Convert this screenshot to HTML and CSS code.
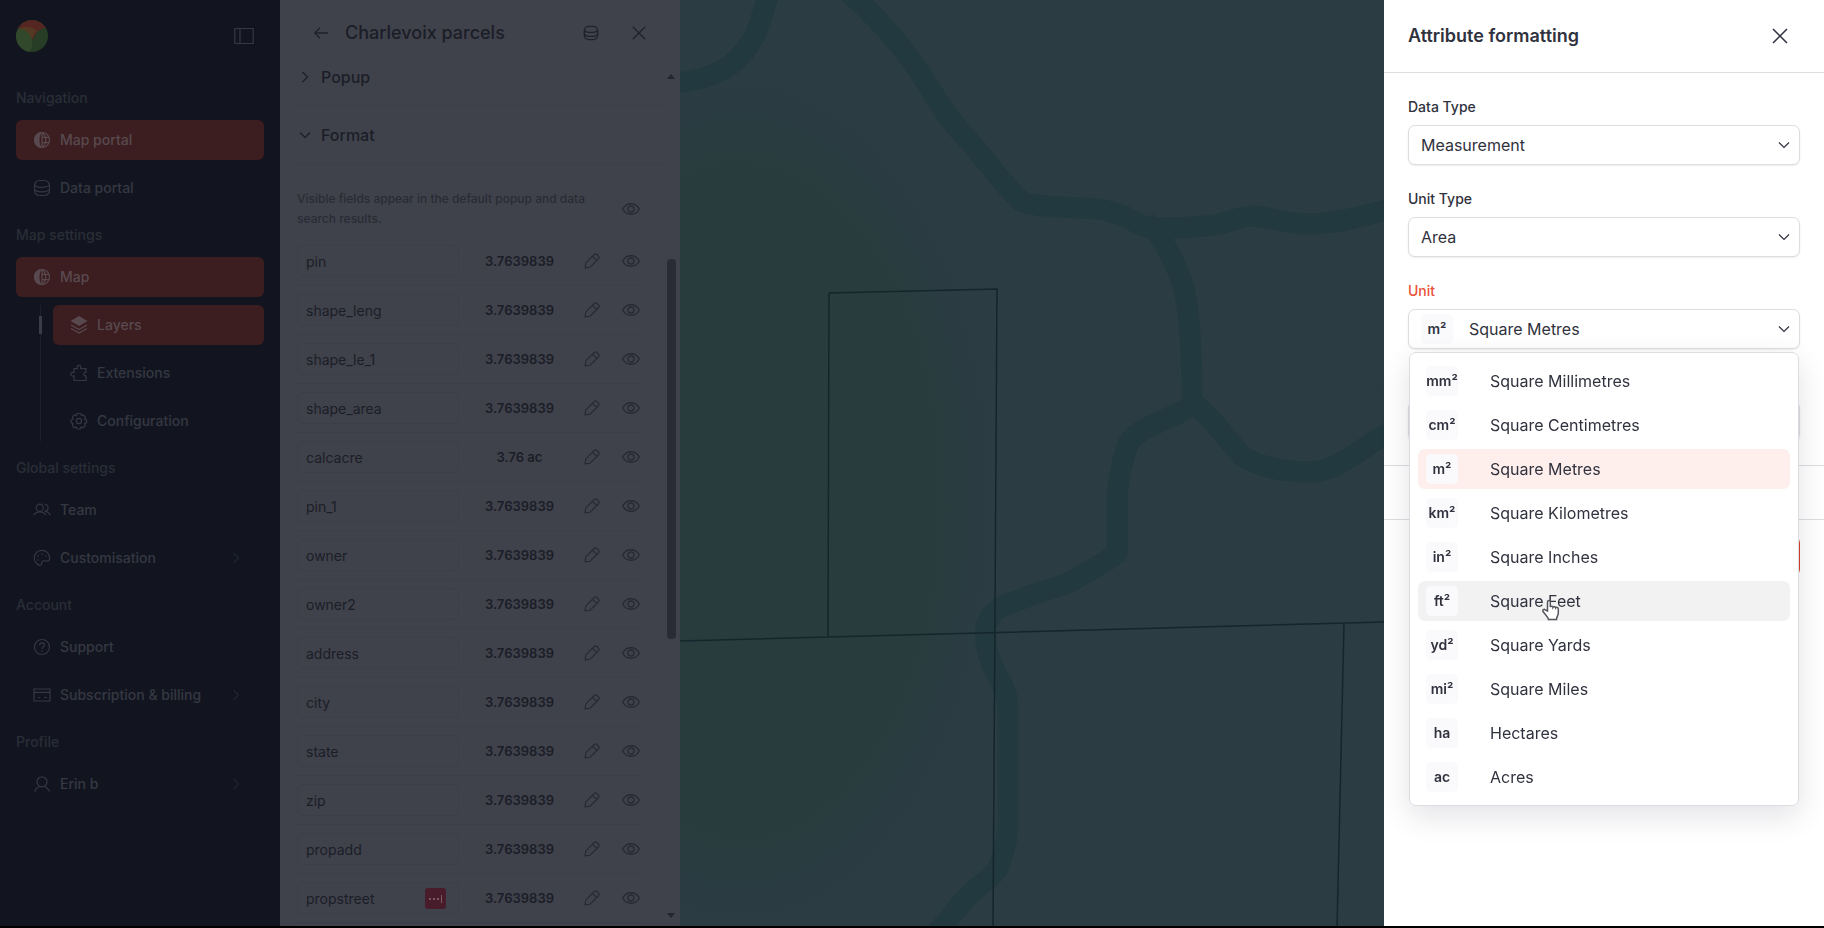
FILE: index.html
```html
<!DOCTYPE html>
<html lang="en">
<head>
	<meta charset="utf-8">
	<title>Map portal - Layers</title>
	<link rel="stylesheet" href="styles.css">
</head>
<body>
<svg class="sprite" aria-hidden="true">
	<symbol id="i-globe" viewBox="0 0 18 18"><circle cx="9" cy="9" r="7.500"/><path d="M9 1.500v15M9 1.500c5 4 5 11 0 15M9 6.300h7M9 11.700h7"/><path class="solid" d="M9 1a8 8 0 0 0 0 16c-2-2.500-2.500-5-2.500-8S7 3.500 9 1z"/></symbol>
	<symbol id="i-db" viewBox="0 0 18 18"><rect x="1.500" y="1.500" width="15" height="15" rx="5"/><path d="M1.500 5c0 4.500 15 4.500 15 0M1.500 9.500c0 4.500 15 4.500 15 0"/></symbol>
	<symbol id="i-layers" viewBox="0 0 18 18"><path class="solid" d="M9 0l8.500 5L9 10 .5 5z"/><path d="M1 9l8 4.500L17 9M1 12.500L9 17l8-4.500"/></symbol>
	<symbol id="i-puzzle" viewBox="0 0 18 18"><path d="M4 4.700h3.300c-1.300-4.500 4.700-4.500 3.400 0h5.300v3.800c-3-.6-3 4 0 3.400v4.600H4v-4.600c-4.300 1-4.300-4.400 0-3.400z"/></symbol>
	<symbol id="i-gear" viewBox="0 0 18 18"><circle cx="9" cy="9" r="2.600"/><path d="M7.200 1.500h3.600l.6 2 2-.5 2 2.200-.8 2 2 .9v2.500l-2 1 .6 2.200-2 2-2.100-.7-.7 1.900H7.200l-.9-1.900-2.200.7-1.800-2.200.8-2-2-1V7.900l2-.9-.6-2.200 1.900-1.900 2.100.7z"/></symbol>
	<symbol id="i-team" viewBox="0 0 20 18"><circle cx="7.500" cy="6.500" r="4"/><path d="M.8 14.800c2.600-5 10.800-5 13.400 0M13 2.700c5 .4 5 7.200 0 7.800 2.800 0 5 1.500 6.300 4.300"/></symbol>
	<symbol id="i-palette" viewBox="0 0 18 18"><path d="M9 1.300a7.700 7.700 0 0 0-3 14.800c2 .9 2.700-.6 2.700-2.100 0-2.300 1.700-2.400 4.300-2 2.200.4 3.700-.5 3.700-3A7.700 7.700 0 0 0 9 1.300z"/><circle class="solid" cx="5" cy="7" r=".8"/><circle class="solid" cx="9" cy="5" r=".8"/><circle class="solid" cx="12.700" cy="7" r=".8"/><circle class="solid" cx="5" cy="11" r=".8"/></symbol>
	<symbol id="i-help" viewBox="0 0 18 18"><circle cx="9" cy="9" r="7.500"/><path d="M6.500 7.200c0-3.300 5-3.100 5-.2 0 1.900-2.500 1.800-2.500 4M9 12.500v1.200"/></symbol>
	<symbol id="i-card" viewBox="0 0 18 18"><path d="M1 3h16v12H1zM1 6.300h16M5 11.500h2M11 11.500h3"/></symbol>
	<symbol id="i-user" viewBox="0 0 18 18"><circle cx="9" cy="6.800" r="5"/><path d="M1.500 16.500c1-2.200 2.500-3.900 4.600-5M16.500 16.500c-1-2.200-2.500-3.900-4.600-5"/></symbol>
	<symbol id="i-right" viewBox="0 0 18 18"><path d="M6.500 4l5 5-5 5"/></symbol>
	<symbol id="i-down" viewBox="0 0 18 18"><path d="M4 6.500l5 5 5-5"/></symbol>
	<symbol id="i-side" viewBox="0 0 20 18"><path d="M.8 1.500h18.400v15H.8zM6 1.500v15"/></symbol>
	<symbol id="i-back" viewBox="0 0 18 18"><path d="M17 9H2M8 3L2 9l6 6"/></symbol>
	<symbol id="i-close" viewBox="0 0 18 18"><path d="M2 2l14 14M16 2L2 16"/></symbol>
	<symbol id="i-eye" viewBox="0 0 18 18"><path d="M.7 9c3.500-7 13.100-7 16.600 0-3.500 7-13.100 7-16.600 0z"/><circle cx="9" cy="9" r="3"/></symbol>
	<symbol id="i-pencil" viewBox="0 0 18 18"><path d="M1.200 16.800l.8-5.600L11.500 1.700c1-1 2-1 3 0l1.800 1.800c1 1 1 2 0 3L6.800 16zM9.700 3.800l4.500 4.500"/></symbol>
</svg>

<div class="app">
	<nav class="sidebar">
		<div class="brand">
			<svg class="logo" viewBox="0 0 32 32" role="img" aria-label="Home">
				<circle cx="16" cy="16" r="16" fill="#283d26"/>
				<path d="M2 8C8-2.500 24-2.500 30 8c-6 .5-10 3-13 12C14 10 9 6.500 2 8z" fill="#552622"/>
				<path d="M1 10c6-4 15-4 20 1-3 2-4 5-5 9-2-6-7-9-15-10z" fill="#543a22"/>
				<path d="M0 16c0-3 1-5 2-7 9 0 13 5 14 12 1 5-1 9-3 11C5 30 0 24 0 16z" fill="#31482a"/>
			</svg>
			<button class="icon-btn" aria-label="Collapse sidebar"><svg class="icon wide"><use href="#i-side"/></svg></button>
		</div>

		<h2>Navigation</h2>
		<ul>
			<li><a class="active" href="#"><svg class="icon"><use href="#i-globe"/></svg>Map portal</a></li>
			<li><a href="#"><svg class="icon"><use href="#i-db"/></svg>Data portal</a></li>
		</ul>

		<h2>Map settings</h2>
		<ul>
			<li><a class="active" href="#"><svg class="icon"><use href="#i-globe"/></svg>Map</a></li>
			<li>
				<ul class="sub">
					<li class="current"><a class="active" href="#"><svg class="icon"><use href="#i-layers"/></svg>Layers</a></li>
					<li><a href="#"><svg class="icon"><use href="#i-puzzle"/></svg>Extensions</a></li>
					<li><a href="#"><svg class="icon"><use href="#i-gear"/></svg>Configuration</a></li>
				</ul>
			</li>
		</ul>

		<h2>Global settings</h2>
		<ul>
			<li><a href="#"><svg class="icon"><use href="#i-team"/></svg>Team</a></li>
			<li><a href="#"><svg class="icon"><use href="#i-palette"/></svg>Customisation<svg class="icon more"><use href="#i-right"/></svg></a></li>
		</ul>

		<h2>Account</h2>
		<ul>
			<li><a href="#"><svg class="icon"><use href="#i-help"/></svg>Support</a></li>
			<li><a href="#"><svg class="icon"><use href="#i-card"/></svg>Subscription &amp; billing<svg class="icon more"><use href="#i-right"/></svg></a></li>
		</ul>

		<h2>Profile</h2>
		<ul>
			<li><a href="#"><svg class="icon"><use href="#i-user"/></svg>Erin b<svg class="icon more"><use href="#i-right"/></svg></a></li>
		</ul>
	</nav>

	<section class="panel">
		<header class="panel-head">
			<button class="icon-btn" aria-label="Back"><svg class="icon"><use href="#i-back"/></svg></button>
			<h1>Charlevoix parcels</h1>
			<button class="icon-btn" aria-label="Data"><svg class="icon"><use href="#i-db"/></svg></button>
			<button class="icon-btn" aria-label="Close layer"><svg class="icon"><use href="#i-close"/></svg></button>
		</header>
		<div class="panel-body">
			<div class="panel-scroll">
				<button class="group first"><svg class="icon"><use href="#i-right"/></svg>Popup</button>
				<button class="group"><svg class="icon"><use href="#i-down"/></svg>Format</button>
				<div class="hint">
					<p>Visible fields appear in the default popup and data search results.</p>
					<button class="icon-btn" aria-label="Toggle all"><svg class="icon"><use href="#i-eye"/></svg></button>
				</div>
				<div id="fields"></div>
			</div>
			<div class="scrollbar">
				<i class="up"></i>
				<i class="thumb"></i>
				<i class="end"></i>
			</div>
		</div>
	</section>

	<main class="map">
		<svg viewBox="0 0 1144 926" preserveAspectRatio="xMinYMin slice" role="img" aria-label="Parcel map">
			<defs>
				<radialGradient id="wood">
					<stop offset="0" stop-color="#283c3e"/>
					<stop offset=".8" stop-color="#283c3e"/>
					<stop offset="1" stop-color="#283c3e" stop-opacity="0"/>
				</radialGradient>
			</defs>
			<ellipse cx="60" cy="500" rx="250" ry="420" fill="url(#wood)"/>
			<g class="river">
				<path d="M90-10C82 15 78 36 64 52 48 72 25 80-6 83"/>
				<path d="M166-10C190 10 215 38 235 65c20 30 30 52 55 77 18 20 34 44 52 60 18 6 38 4 56 6 18 0 32 2 46 8 14 8 20 11 30 12 22 0 44 0 65-4 14-4 26-8 36-8 18 2 36 8 54 8 26 0 54-8 82-15"/>
				<path d="M466 222c18 16 28 38 37 62 8 30 9 80 9 121"/>
				<path d="M510 402c18 10 36 36 52 54 18 12 46 16 68 16 28 0 50-24 80-40"/>
				<path d="M512 405c-16 14-50 18-64 39-6 18-11 36-11 59v50c-14 12-26 16-43 27-14 8-34 10-50 18-14 6-32 8-38 28-2 18 2 32 11 49 10 16 11 26 11 42v100c0 24-4 36-11 53-12 14-26 20-36 34-8 10-14 18-26 30"/>
			</g>
			<g class="parcels">
				<path d="M0 641l704-19M149 293l168-4-4 640M149 293l-1 344M664 624l-7 305"/>
			</g>
		</svg>
	</main>
</div>

<aside class="drawer">
	<header class="drawer-head">
		<h2>Attribute formatting</h2>
		<button class="icon-btn" aria-label="Close"><svg class="icon"><use href="#i-close"/></svg></button>
	</header>
	<form class="drawer-form">
		<div class="field">
			<label for="dataType">Data Type</label>
			<div class="control">
				<select id="dataType"><option>Measurement</option></select>
				<svg class="icon chevron"><use href="#i-down"/></svg>
			</div>
		</div>
		<div class="field">
			<label for="unitType">Unit Type</label>
			<div class="control">
				<select id="unitType"><option>Area</option></select>
				<svg class="icon chevron"><use href="#i-down"/></svg>
			</div>
		</div>
		<div class="field open">
			<label for="unit">Unit</label>
			<div class="control">
				<select id="unit" class="with-symbol"><option>Square Metres</option></select>
				<span class="symbol picked">m²</span>
				<svg class="icon chevron"><use href="#i-down"/></svg>
				<ul class="menu" role="listbox" aria-label="Unit">
					<li role="option"><span class="symbol">mm²</span>Square Millimetres</li>
					<li role="option"><span class="symbol">cm²</span>Square Centimetres</li>
					<li role="option" class="selected" aria-selected="true"><span class="symbol">m²</span>Square Metres</li>
					<li role="option"><span class="symbol">km²</span>Square Kilometres</li>
					<li role="option"><span class="symbol">in²</span>Square Inches</li>
					<li role="option" class="hover"><span class="symbol">ft²</span>Square Feet
						<svg class="pointer" viewBox="0 0 20 22"><path d="M6.500 12V3c0-2 2.800-2 2.800 0v5c.5-1.200 2.600-1 2.700.4.600-1.100 2.500-.9 2.700.5.700-1 2.600-.6 2.600 1v4c0 2.500-1.800 4-1.800 6.600h-8c-.5-2.500-3.500-5-5.500-8-.9-1.600.9-2.800 2.300-1.600z"/></svg>
					</li>
					<li role="option"><span class="symbol">yd²</span>Square Yards</li>
					<li role="option"><span class="symbol">mi²</span>Square Miles</li>
					<li role="option"><span class="symbol">ha</span>Hectares</li>
					<li role="option"><span class="symbol">ac</span>Acres</li>
				</ul>
			</div>
		</div>
		<div class="field">
			<label for="decimals"></label>
			<div class="control">
				<select id="decimals" aria-label="Decimals"></select>
			</div>
		</div>
	</form>
	<div class="preview"></div>
	<footer class="drawer-foot">
		<button class="save" aria-label="Save"></button>
	</footer>
</aside>

<script>
// name / sample value for each attribute in the layer
var fields = ['pin', 'shape_leng', 'shape_le_1', 'shape_area', 'calcacre', 'pin_1', 'owner',
	'owner2', 'address', 'city', 'state', 'zip', 'propadd', 'propstreet'];
var samples = { calcacre: '3.76 ac' };
var html = '';

fields.forEach(function (name) {
	html += '<div class="row">' +
		'<div class="name"><input type="text" aria-label="' + name + '" value="' + name + '">' +
		(name == 'propstreet' ? '<span class="filler"><i></i><i></i><i></i><b></b></span>' : '') + '</div>' +
		'<span class="sample">' + (samples[name] || '3.7639839') + '</span>' +
		'<button class="icon-btn" aria-label="Edit ' + name + '"><svg class="icon small"><use href="#i-pencil"/></svg></button>' +
		'<button class="icon-btn" aria-label="Show ' + name + '"><svg class="icon"><use href="#i-eye"/></svg></button>' +
		'</div>';
});
document.getElementById('fields').innerHTML = html;
</script>
</body>
</html>
```
FILE: styles.css
```css
* { box-sizing: border-box; }

body {
	margin: 0;
	height: 100vh;
	overflow: hidden;
	background: #000;
	font-family: Inter, "Liberation Sans", sans-serif;
	font-size: 14px;
	line-height: 20px;
}
h1, h2, p, ul { margin: 0; padding: 0; }
ul { list-style: none; }
button, input, select { font: inherit; color: inherit; }
button { border: 0; padding: 0; background: none; }

.sprite { position: absolute; width: 0; height: 0; }
.icon { flex: none; width: 18px; height: 18px; fill: none; stroke: currentColor; stroke-width: 1.2; }
.icon.small { width: 16px; height: 16px; }
.icon.wide { width: 20px; }
.solid { fill: currentColor; stroke: none; }
.icon-btn { display: flex; align-items: center; justify-content: center; width: 24px; height: 24px; }

.app { display: flex; height: calc(100vh - 2px); }

/* sidebar */
.sidebar {
	flex: none;
	width: 280px;
	padding: 20px 16px;
	background: #12151f;
	color: #353842;
	font-weight: 500;
}
.brand { display: flex; align-items: center; justify-content: space-between; height: 32px; margin-bottom: 36px; padding-right: 8px; }
.logo { width: 32px; height: 32px; }
.sidebar h2 { margin-bottom: 12px; font-size: 14px; font-weight: 500; color: #2a2d37; }
.sidebar ul { display: flex; flex-direction: column; gap: 8px; margin-bottom: 17px; }
.sidebar a {
	display: flex;
	align-items: center;
	gap: 9px;
	height: 40px;
	padding: 0 17px;
	border-radius: 6px;
	color: inherit;
	text-decoration: none;
}
.sidebar a.active { background: #3c1e21; color: #58494f; }
.sidebar .more { margin-left: auto; margin-right: 2px; color: #22252e; }
.sidebar .sub { margin: 0 0 0 24px; padding-left: 12px; border-left: 1px solid #1e212b; }
.current { position: relative; }
.current::before { content: ""; position: absolute; left: -14px; top: 11px; width: 3px; height: 18px; background: #3a3d47; }

/* layer panel */
.panel { flex: none; display: flex; flex-direction: column; width: 400px; background: #40424b; color: #1b1d27; }
.panel-head { display: flex; align-items: center; flex: none; height: 66px; padding: 0 29px; gap: 12px; }
.panel-head h1 { flex: 1; font-size: 18px; font-weight: 500; line-height: 24px; }
.panel-head .icon-btn + .icon-btn { margin-left: 12px; }
.panel-head .icon { width: 16px; height: 16px; color: #1f212b; stroke-width: 1.5; }
.panel-body { flex: 1; display: flex; min-height: 0; }
.panel-scroll { flex: 1; overflow: hidden; padding-left: 16px; }
.group {
	display: flex;
	align-items: center;
	gap: 7px;
	width: 100%;
	height: 58px;
	font-size: 16px;
	font-weight: 500;
	border-bottom: 1px solid #3d3f48;
}
.group.first { height: 40px; padding-bottom: 18px; }
.hint { display: flex; align-items: center; margin: 25px 19px 8px 1px; color: #292b35; }
.hint p { flex: 1; padding-right: 16px; font-size: 12px; font-weight: 500; }
.row {
	display: flex;
	align-items: center;
	height: 49px;
	margin: 0 19px 0 1px;
	border-bottom: 1px solid #3d3f48;
}
.name { position: relative; width: 162px; }
.name input {
	width: 100%;
	height: 32px;
	padding: 0 8px;
	border: 1px solid #3d3f48;
	border-radius: 6px;
	background: none;
}
.filler {
	position: absolute;
	right: 13px;
	top: 6px;
	display: flex;
	align-items: center;
	justify-content: center;
	gap: 2px;
	width: 21px;
	height: 21px;
	border-radius: 3px;
	background: #481c2a;
}
.filler i { width: 2px; height: 2px; background: #7d5966; }
.filler b { width: 1px; height: 8px; background: #7d5966; }
.sample { flex: 1; text-align: center; font-size: 13px; font-weight: 600; }
.row .icon-btn + .icon-btn { margin-left: 15px; }
.row .icon, .hint .icon { color: #272933; stroke-width: 1.3; }

.scrollbar { flex: none; display: flex; flex-direction: column; align-items: center; width: 18px; padding: 8px 0; }
.scrollbar .up { border: 4px solid transparent; border-top: 0; border-bottom: 5px solid #22242e; }
.scrollbar .end { margin-top: auto; border: 4px solid transparent; border-bottom: 0; border-top: 5px solid #22242e; }
.scrollbar .thumb { width: 9px; height: 45%; margin-top: 180px; border-radius: 4px; background: #292b35; }

/* map */
.map { flex: 1; min-width: 0; background: #2b3c43; }
.map svg { display: block; width: 100%; height: 100%; }
.river { fill: none; stroke: #21393f; stroke-width: 21; stroke-linejoin: round; }
.parcels { fill: none; stroke: #14262b; stroke-width: 1.5; }

/* formatting drawer */
.drawer { position: fixed; top: 0; right: 0; bottom: 2px; width: 440px; background: #fff; color: #30323e; }
.drawer-head {
	display: flex;
	align-items: center;
	justify-content: space-between;
	height: 73px;
	padding: 0 32px 0 24px;
	border-bottom: 1px solid #dcdde0;
}
.drawer-head h2 { font-size: 18px; font-weight: 600; line-height: 24px; }
.drawer-head .icon { stroke-width: 1.5; }
.drawer-form { display: flex; flex-direction: column; gap: 24px; padding: 24px; border-bottom: 1px solid #dcdde0; }
.field label { display: block; height: 20px; margin-bottom: 8px; font-weight: 500; }
.field.open label { color: #e8503a; }
.control { position: relative; }
.control select {
	display: block;
	width: 100%;
	height: 40px;
	padding: 0 12px;
	border: 1px solid #dcdde1;
	border-radius: 7px;
	background: #fff;
	font-size: 16px;
	appearance: none;
	box-shadow: 0 1px 2px rgba(20, 20, 40, .08);
}
.control .with-symbol { padding-left: 60px; }
.chevron { position: absolute; right: 7px; top: 11px; }
.symbol {
	display: flex;
	align-items: center;
	justify-content: center;
	width: 32px;
	height: 30px;
	border-radius: 5px;
	background: #fafafc;
	font-size: 14px;
	font-weight: 600;
}
.picked { position: absolute; left: 13px; top: 5px; }
.menu {
	position: absolute;
	z-index: 2;
	top: 43px;
	left: 1px;
	right: 1px;
	display: flex;
	flex-direction: column;
	gap: 4px;
	padding: 8px;
	border: 1px solid #dcdde1;
	border-radius: 7px;
	background: #fff;
	box-shadow: 0 10px 30px rgba(20, 20, 40, .12);
	font-size: 16px;
}
.menu li { position: relative; display: flex; align-items: center; gap: 32px; height: 40px; padding: 0 8px; border-radius: 7px; }
.menu .selected { background: #feeeec; }
.menu .hover { background: #f2f2f3; }
.pointer { position: absolute; left: 123px; top: 18px; width: 20px; height: 22px; fill: #fff; stroke: #55565c; stroke-width: 1.5; }
.preview { height: 54px; border-bottom: 1px solid #dcdde0; }
.drawer-foot { display: flex; justify-content: flex-end; padding: 16px 24px; }
.save { width: 88px; height: 40px; border-radius: 7px; background: #d9412d; }
```
